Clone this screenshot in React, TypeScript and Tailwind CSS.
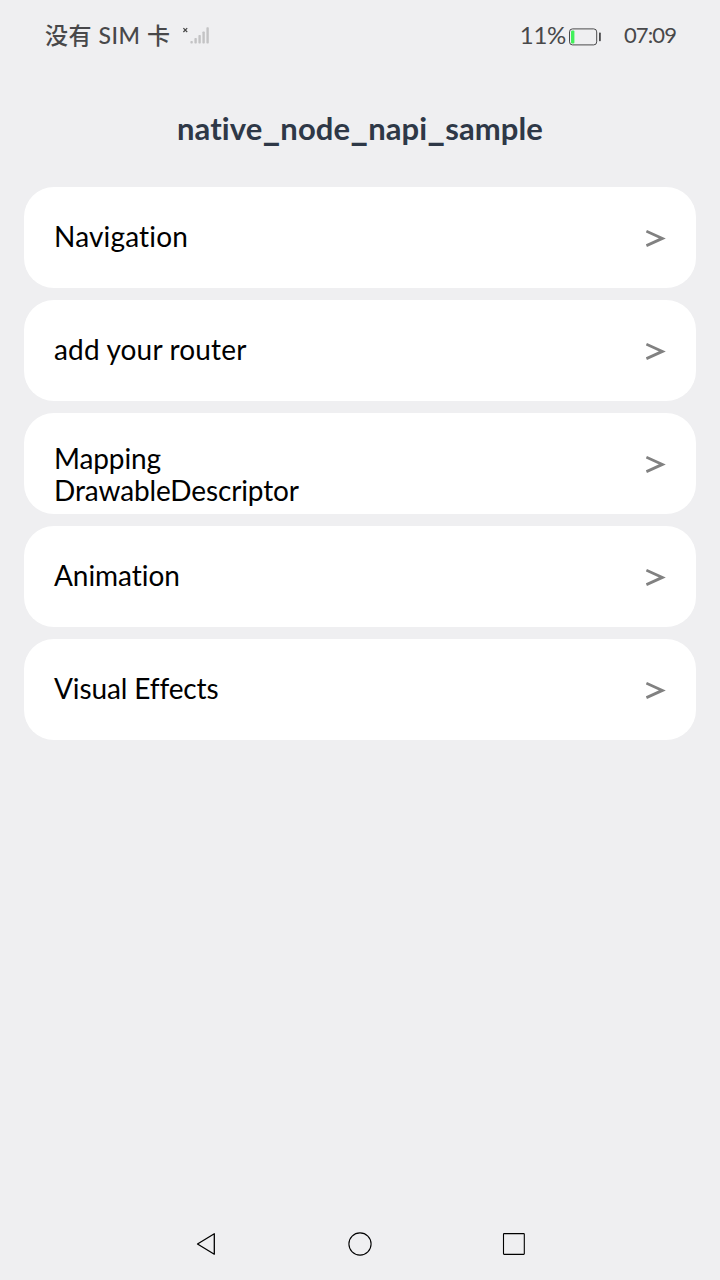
import { Fragment } from "react";

interface Entry {
  label: string;
  tracking: string;
  offset: string;
}

const entries: Entry[] = [
  { label: "Navigation", tracking: "tracking-[0.17px]", offset: "pt-[33px]" },
  { label: "add your router", tracking: "tracking-[0.16px]", offset: "pt-[33px]" },
  { label: "Mapping DrawableDescriptor", tracking: "tracking-[-0.12px]", offset: "pt-[29px]" },
  { label: "Animation", tracking: "tracking-[-0.05px]", offset: "pt-[33px]" },
  { label: "Visual Effects", tracking: "tracking-[-0.12px]", offset: "pt-[33px]" },
];

const titleParts = ["native", "node", "napi", "sample"];

function SignalIcon() {
  return (
    <svg className="ml-[11px] h-[22px] w-[28px]" viewBox="0 0 28 22" fill="none">
      <path d="M1.4 4.2l3.8 3.8M5.2 4.2l-3.8 3.8" stroke="#444" strokeWidth="1.2" />
      <g fill="#c3c3c5">
        <rect x="8.4" y="17" width="2.4" height="2.6" rx="0.8" />
        <rect x="12.4" y="14" width="2.4" height="5.6" rx="0.8" />
        <rect x="16.4" y="11" width="2.4" height="8.6" rx="0.8" />
        <rect x="20.4" y="7.5" width="2.4" height="12.1" rx="0.8" />
        <rect x="24.4" y="3.2" width="2.4" height="16.4" rx="0.8" />
      </g>
    </svg>
  );
}

function BatteryIcon() {
  return (
    <svg className="mt-[3px] ml-[3px] h-[18px] w-[33px]" viewBox="0 0 33 18" fill="none">
      <rect x="0.5" y="0.9" width="27.2" height="16" rx="3" stroke="#4a4a4c" />
      <rect x="2" y="2.4" width="3.4" height="13" rx="1" fill="#41f05a" />
      <rect x="30" y="4.6" width="1.8" height="8.6" rx="0.6" fill="#4a4a4c" />
    </svg>
  );
}

function StatusBar() {
  return (
    <header className="flex h-[70px] items-center pr-11 pl-[45px] text-[#48484a]">
      <span className="font-['Lato','Noto_Sans_CJK_SC',sans-serif] text-[23px] leading-[34px] font-medium tracking-[0.55px] whitespace-nowrap">
        没有 SIM 卡
      </span>
      <SignalIcon />
      <span className="ml-auto text-[24px] leading-8 tracking-[-0.3px]">11%</span>
      <BatteryIcon />
      <span className="ml-[22px] text-[22px] leading-8 tracking-[-0.9px]">07:09</span>
    </header>
  );
}

function Row({ label, tracking, offset }: Entry) {
  return (
    <li className="flex h-[101px] justify-between rounded-[30px] bg-white pr-[30px] pl-[30px]">
      <span className={`w-[270px] text-[28px] leading-8 text-black ${tracking} ${offset}`}>{label}</span>
      <svg className="mt-[42px] h-5 w-5" viewBox="0 0 20 20" fill="none">
        <path d="M0.4 2.2L16.4 9.4L0.4 16.6" stroke="#818181" strokeWidth="2.8" />
      </svg>
    </li>
  );
}

function NavigationBar() {
  return (
    <nav className="mt-auto flex h-[72px] items-center justify-center gap-[130px]">
      <svg className="h-6 w-6" viewBox="0 0 24 24" fill="none" stroke="#000" strokeWidth="1.3">
        <path d="M3.5 12L20.3 1.8V22.2Z" strokeLinejoin="round" />
      </svg>
      <svg className="h-6 w-6" viewBox="0 0 24 24" fill="none" stroke="#000" strokeWidth="1.1">
        <circle cx="12" cy="12" r="11.1" />
      </svg>
      <svg className="h-6 w-6" viewBox="0 0 24 24" fill="none" stroke="#000" strokeWidth="1.1">
        <rect x="1.5" y="1.6" width="20.8" height="20.8" rx="0.6" />
      </svg>
    </nav>
  );
}

export default function App() {
  return (
    <div className="flex h-[1280px] w-[720px] flex-col bg-[#efeff1] font-['Lato','Noto_Sans_CJK_SC',sans-serif]">
      <StatusBar />
      <h1 className="mt-9 h-10 text-center text-[31px] leading-10 font-bold tracking-[0.1px] text-[#2e3847]">
        {titleParts.map((part, index) => (
          <Fragment key={part}>
            {index > 0 && <span className="text-[38px] leading-none font-black">_</span>}
            {part}
          </Fragment>
        ))}
      </h1>
      <ul className="mt-[41px] flex flex-col gap-3 px-6">
        {entries.map((entry) => (
          <Row key={entry.label} {...entry} />
        ))}
      </ul>
      <NavigationBar />
    </div>
  );
}
